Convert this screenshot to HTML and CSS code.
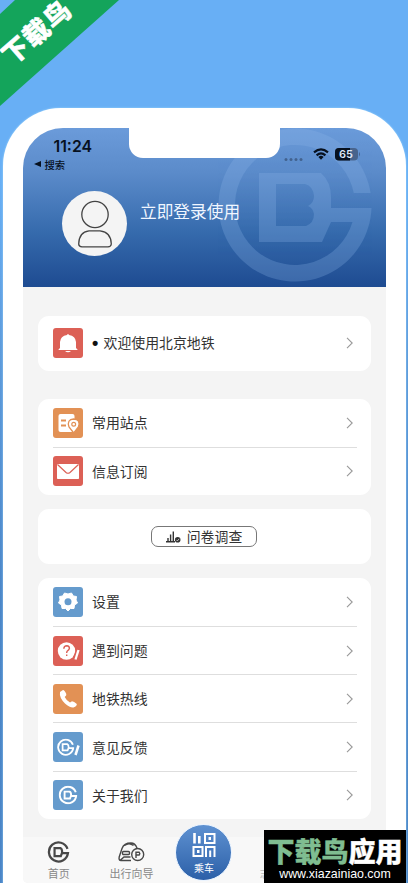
FILE: index.html
```html
<!DOCTYPE html>
<html lang="zh-CN">
<head>
<meta charset="utf-8">
<title>北京地铁</title>
<link rel="stylesheet" href="styles.css">
</head>
<body>
<svg width="0" height="0" class="defs">
  <symbol id="logo" viewBox="0 0 154 154">
    <path fill="currentColor" d="M152.600 65A76.500 76.500 0 1 0 153.500 80H113V94H134.500A60 60 0 1 1 135.800 65Z"/>
    <path fill-rule="evenodd" d="M41 45H103Q113 54 113 69V94L104 114H41ZM58 56V98H88Q96 95 96 86Q95 80 90 78Q96 75 96 68Q95 58 87 56Z" fill="currentColor"/>
  </symbol>
  <symbol id="mark" viewBox="0 0 24 24">
    <path d="M21.800 8.500A10.400 10.400 0 1 0 22.300 13.300H15.500" fill="none" stroke="currentColor" stroke-width="2.500"/>
    <path d="M7.700 7.700H14Q16 8.500 16 12.500L14.500 16.400H7.700Z" fill="none" stroke="currentColor" stroke-width="2.400"/>
  </symbol>
  <symbol id="chev" viewBox="0 0 8 12"><path d="M1 .8L6.200 6L1 11.200" fill="none" stroke="#999" stroke-width="1.100"/></symbol>
</svg>
<main class="stage">
  <div class="ribbon"><span>下载鸟</span></div>
  <section class="phone">
    <div class="screen">
      <div class="notch"></div>
      <header class="hero">
        <svg class="watermark"><use href="#logo"/></svg>
        <div class="status">
          <div class="clock">11:24</div>
          <svg class="signals" width="78" height="16" viewBox="0 0 78 16">
            <g fill="#42628f"><circle cx="3" cy="12.500" r="1.500"/><circle cx="8" cy="12.500" r="1.500"/><circle cx="13" cy="12.500" r="1.500"/><circle cx="18" cy="12.500" r="1.500"/></g>
            <g fill="none" stroke="#07111f" stroke-width="2.100"><path d="M31 5.400Q38 -.8 45 5.400M33.600 8.400Q38 4.500 42.400 8.400"/></g>
            <path d="M35.400 9.900Q38 7.800 40.600 9.900L38 12.800Z" fill="#07111f"/>
            <rect x="52" y="1" width="23" height="12.500" rx="4" fill="#48648d"/>
            <path d="M56 1H67V13.500H56Q52 13.500 52 9.500V5Q52 1 56 1Z" fill="#07111f"/>
            <path d="M76 5Q78 7 76 9.500Z" fill="#48648d"/>
            <text x="56" y="11.200" class="charge">65</text>
          </svg>
        </div>
        <div class="back"><i></i>搜索</div>
        <div class="user">
          <div class="avatar"><svg width="36" height="48" viewBox="0 0 36 48"><g fill="none" stroke="#444" stroke-width="1.300"><circle cx="18" cy="14.500" r="13.200"/><path d="M12 30.800H23Q34 32 34.300 44Q34 46.800 31 46.800H5Q1.700 46.800 1.700 44Q2 32 12 30.800Z"/></g></svg></div>
          <div class="login">立即登录使用</div>
        </div>
      </header>
      <div class="content">
        <div class="card notice">
          <div class="row"><span class="icon red"><svg viewBox="0 0 30 30"><path d="M14 7Q15 5 16 7Q22.500 8 23 14V20L24.500 21.500V22H5.500V21.500L7 20V14Q7.500 8 14 7ZM12 23H18Q15 25.500 12 23Z" fill="#fff"/></svg></span><span class="label"><b>•</b>欢迎使用北京地铁</span><svg class="chev"><use href="#chev"/></svg></div>
        </div>
        <div class="card list pair">
          <div class="row"><span class="icon orange"><svg viewBox="0 0 30 30"><rect x="5.500" y="6" width="16" height="18" rx="2" fill="#fff"/><path d="M8 12.500H13M8 17.500H13" stroke="#e29155" stroke-width="1.800"/><path d="M20.700 25L16 19Q13.500 11.500 20.700 11Q27.900 11.500 25.400 19Z" fill="#fff" stroke="#e29155" stroke-width="1.300"/><circle cx="20.700" cy="16.300" r="1.900" fill="none" stroke="#e29155" stroke-width="1.200"/></svg></span><span class="label">常用站点</span><svg class="chev"><use href="#chev"/></svg></div>
          <div class="row"><span class="icon red"><svg viewBox="0 0 30 30"><rect x="4" y="8" width="22" height="15" rx=".8" fill="#fff"/><path d="M4.500 8.500L13 16.500Q15 18 17 16.500L25.500 8.500" fill="none" stroke="#dc6056" stroke-width="1.200"/></svg></span><span class="label">信息订阅</span><svg class="chev"><use href="#chev"/></svg></div>
        </div>
        <div class="card survey">
          <div class="button"><svg width="15" height="12" viewBox="0 0 15 12"><path d="M0 10.800H9M2 10V7M4.600 10V3.500M7.300 10V.5" fill="none" stroke="#333" stroke-width="1.400"/><circle cx="11.700" cy="8.800" r="2.800" fill="#333"/><path d="M10.300 8.800L11.400 9.900L13.200 7.800" fill="none" stroke="#fff" stroke-width=".7"/></svg><span>问卷调查</span></div>
        </div>
        <div class="card list">
          <div class="row"><span class="icon blue"><svg viewBox="0 0 30 30"><path d="M11.500 6L15 7L18.500 6L20.300 9L23.500 9.500L23 13L24.500 16L21.500 18L21 21.500L17.500 21.500L15 24L12.500 21.500L9 21.500L8.500 18L5.500 16L7 13L6.500 9.500L9.700 9Z" fill="#fff" stroke="#fff" stroke-linejoin="round"/><circle cx="15" cy="14.800" r="3.500" fill="#659bcd"/></svg></span><span class="label">设置</span><svg class="chev"><use href="#chev"/></svg></div>
          <div class="row"><span class="icon red"><svg viewBox="0 0 30 30"><circle cx="13.500" cy="15" r="8.700" fill="#fff"/><path d="M10.800 12.700Q11 9.800 13.800 9.800Q16.500 10 16.400 12.500Q16 14 14.500 14.800Q13.600 15.500 13.700 17M13.700 18.500V20" fill="none" stroke="#dc6056" stroke-width="1.400"/><path d="M25.500 14.500L22.300 23" stroke="#dc6056" stroke-width="5"/><path d="M25.500 14L22.500 23.500" stroke="#fff" stroke-width="2.300"/></svg></span><span class="label">遇到问题</span><svg class="chev"><use href="#chev"/></svg></div>
          <div class="row"><span class="icon orange"><svg viewBox="0 0 30 30"><path d="M7 8L10 6Q11.500 6 13.300 10Q13.800 11.500 11.700 13Q13 16 17 18.500L19 17.300Q21 17.300 23.800 20Q24 22 20.500 23.500Q17 24 12 19.500Q6 13.500 7 8Z" fill="#fff"/></svg></span><span class="label">地铁热线</span><svg class="chev"><use href="#chev"/></svg></div>
          <div class="row"><span class="icon blue"><svg viewBox="0 0 30 30"><use href="#mark" x="4" y="6.500" width="17.500" height="17.500"/><path d="M25.500 13.500L22.500 23" stroke="#659bcd" stroke-width="5"/><path d="M25.500 13.500L22.500 23" stroke="#fff" stroke-width="2.500"/></svg></span><span class="label">意见反馈</span><svg class="chev"><use href="#chev"/></svg></div>
          <div class="row"><span class="icon blue"><svg viewBox="0 0 30 30"><use href="#mark" x="5.500" y="5.500" width="19" height="19"/></svg></span><span class="label">关于我们</span><svg class="chev"><use href="#chev"/></svg></div>
        </div>
      </div>
      <nav class="tabs">
        <div class="tab"><svg width="23" height="22"><use href="#mark"/></svg>首页</div>
        <div class="tab"><svg width="27" height="22" viewBox="0 0 27 22"><g fill="none" stroke="#484848" stroke-width="1.400"><path d="M13 19.500H3Q.5 19.500 1.200 16L4 7.500Q6 2 13 2Q17 2 19 7M2.500 19L6 16H12.500M6.500 4.500Q11 1 15.500 4.500"/><rect x="4.500" y="10.500" width="7" height="3" rx="1"/><circle cx="19.700" cy="13.500" r="6"/><path d="M18 17V11.200H21.200Q22.500 12.600 21.200 14H18"/></g></svg>出行向导</div>
        <div class="ride"><svg width="24" height="24" viewBox="0 0 24 24"><path d="M2.500 0V10.500M7.300 3V10.500" stroke="#fff" stroke-width="2.600"/><g fill="none" stroke="#fff" stroke-width="2"><rect x="13" y="1" width="9.500" height="9"/><rect x="1.500" y="14" width="9" height="9"/><path d="M14 24V14H22.500V24M18.200 17.500V24"/></g><path d="M16.500 4H19V7H16.500ZM5 17H7.500V20H5Z" fill="#fff"/></svg>乘车</div>
        <div class="message">志</div>
      </nav>
    </div>
  </section>
  <aside class="brand"><div class="name"><span>下载鸟</span>应用</div><div class="url">www.xiazainiao.com</div></aside>
</main>
</body>
</html>
```

FILE: styles.css
```css
* { box-sizing: border-box; }
body { margin: 0; font-family: "Noto Sans CJK SC", sans-serif; color: #333; }
svg { display: block; flex: none; }
.defs { position: absolute; }
.stage { position: relative; width: 408px; height: 883px; overflow: hidden; padding: 108px 0 0 2.5px; background: linear-gradient(#68aff5 0 180px, #5d9bdc 350px, #4b86c8 600px, #4a85c7); }
.ribbon { position: absolute; left: 0; top: 0; width: 119px; height: 106px; background: #14a45b; clip-path: polygon(15px 0, 100% 0, 0 100%, 0 14px); }
.ribbon span { position: absolute; left: -8px; top: 14px; width: 88px; text-align: center; color: #fff; font-size: 26px; line-height: 34px; font-weight: 900; letter-spacing: 1.500px; transform: rotate(-41deg); white-space: nowrap; -webkit-text-stroke: .5px #fff; }
.phone { width: 403px; height: 850px; padding: 20px 20px 0; background: #fff; border-radius: 58px 58px 0 0; box-shadow: 0 0 2px #a9dcff; }
.screen { position: relative; width: 363px; height: 755px; overflow: hidden; border-radius: 40px 40px 5px 5px; background: #f4f4f4; display: flex; flex-direction: column; }
.notch { position: absolute; z-index: 2; left: 106px; top: -1px; width: 151px; height: 31px; background: #fff; border-radius: 0 0 14px 14px; }
.hero { position: relative; height: 159px; flex: none; background: linear-gradient(#6b9bda, #5b8bca 28%, #366bad 65%, #1e4b91); }
.watermark { position: absolute; left: 195px; top: 0; width: 154px; height: 154px; color: #8bb5e8; opacity: .27; }
.status { position: relative; display: flex; justify-content: space-between; padding: 9px 24.500px 0 31px; height: 28px; }
.clock { font: 600 15.800px/20px Inter, sans-serif; color: #07111f; }
.signals { margin-top: 10px; }
.charge { font: 600 11px Inter, sans-serif; fill: #dce7f7; }
.back { position: relative; display: flex; align-items: center; gap: 4px; height: 16px; padding-left: 11px; font-size: 10.300px; font-weight: 500; color: #07111f; }
.back i { border: 3.500px solid transparent; border-right: 7px solid #07111f; border-left: 0; }
.user { position: relative; display: flex; gap: 13px; padding: 19px 0 0 39.500px; }
.avatar { width: 65px; height: 65px; border-radius: 50%; background: #f4f4f4; display: grid; place-items: center; }
.login { font-size: 16.700px; line-height: 24px; color: #f0f6ff; margin-top: 8px; }
.content { padding: 28.500px 14.500px 0 15.500px; height: 550px; flex: none; }
.card { background: #fff; border-radius: 11px; }
.notice { padding-top: 3px; height: 55px; margin-bottom: 28px; }
.pair { margin-bottom: 14px; }
.row { display: flex; align-items: center; height: 48.200px; margin: 0 14px 0 15px; }
.row + .row { border-top: 1px solid #dedede; }
.icon { width: 30px; height: 30px; border-radius: 3px; color: #fff; }
.icon svg { width: 30px; height: 30px; }
.red { background: #dc6056; }
.orange { background: #e29155; }
.blue { background: #659bcd; }
.label { flex: 1; margin: -1px 0 0 9px; font-size: 13.900px; line-height: 20px; }
.label b { display: inline-block; width: 11.500px; font: bold 18px/18px "Liberation Sans", sans-serif; color: #111; vertical-align: -1px; }
.chev { width: 8px; height: 12px; margin-right: 3px; }
.survey { height: 55.500px; margin-bottom: 13.500px; display: flex; justify-content: center; align-items: center; }
.button { display: flex; align-items: center; justify-content: center; gap: 6px; width: 106px; height: 21px; margin-right: 1px; border: 1px solid #777; border-radius: 7px; font-size: 13.900px; line-height: 19px; }
.tabs { display: flex; height: 46px; background: #f8f8f8; color: #888; font-size: 11px; line-height: 15px; }
.tab { display: flex; flex-direction: column; align-items: center; width: 72.600px; padding-top: 4px; gap: 3px; color: #888; }
.tab svg { color: #484848; }
.ride { width: 57px; height: 57px; flex: none; margin: -13.500px 7.800px 0; border: 1.500px solid #e9f3ff; border-radius: 50%; background: linear-gradient(#5e91d1, #2c60a8); color: #fff; display: flex; flex-direction: column; align-items: center; padding-top: 8px; gap: 3px; font-size: 10px; }
.message { width: 4px; height: 15px; margin: 29px 0 0 19.500px; overflow: hidden; color: #bbb; }
.brand { position: absolute; left: 264px; top: 830px; width: 142px; height: 53px; background: #000; color: #fff; text-align: center; }
.name { font-size: 27px; line-height: 34px; padding-top: 4px; font-weight: 900; white-space: nowrap; -webkit-text-stroke: .4px currentColor; }
.name span { color: #7fbd91; }
.url { font: 12.400px/13px "Liberation Sans", sans-serif; }
```
